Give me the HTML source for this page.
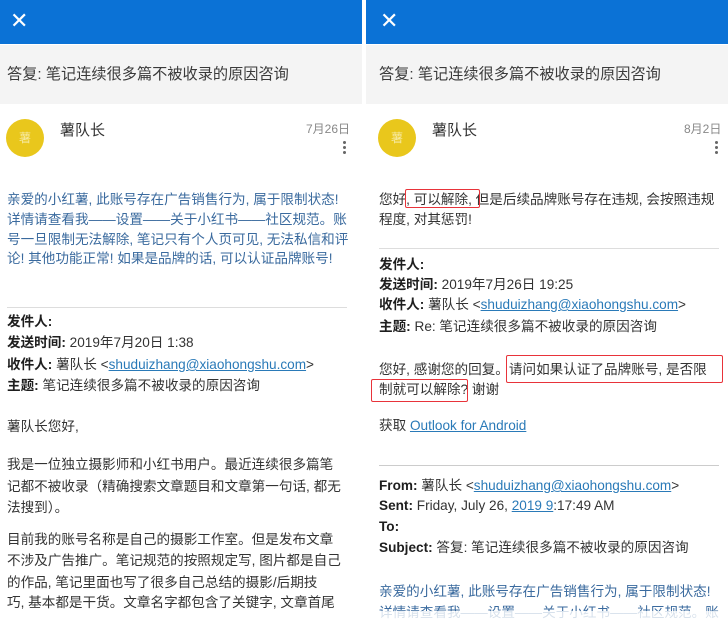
<!DOCTYPE html>
<html><head><meta charset="utf-8"><style>
*{margin:0;padding:0;box-sizing:border-box}
body{width:728px;height:619px;overflow:hidden;background:#fff;position:relative;font-family:"Liberation Sans","Noto Sans CJK SC",sans-serif;color:#333}
.a{position:absolute;white-space:nowrap;font-size:13.6px;line-height:18px}
.hd{position:absolute;top:0;height:44px;background:#0b72d6}
.band{position:absolute;top:45px;height:59px;background:#f4f4f4}
.t{font-size:15.2px;color:#3a3a3a}
.av{position:absolute;width:38px;height:38px;border-radius:50%;background:#e9c71c;color:#f6e9a0;font-size:12px;text-align:center;line-height:38px;top:119px}
.nm{font-size:15px;color:#333}
.dt{font-size:12px;color:#888}
.dots{position:absolute;width:3px;top:141px}
.dots i{display:block;width:3px;height:3px;background:#666;border-radius:50%;margin-bottom:2px}
.bl{color:#3a6a9e}
b{color:#1e1e1e}
.lk{color:#2a7ab8;text-decoration:underline}
.hr{position:absolute;height:1px;background:#ddd}
.rb{position:absolute;border:1.5px solid #e8333a;border-radius:2px}
.x{position:absolute;top:10px;color:#fff;font-size:22px;line-height:22px}
</style></head><body>
<div class="hd" style="left:0;width:362px"></div>
<div class="hd" style="left:366px;width:362px"></div>
<div class="x" style="left:10px">✕</div>
<div class="x" style="left:380px">✕</div>
<div class="band" style="left:0;width:362px"></div>
<div class="band" style="left:366px;width:362px"></div>
<div class="a t" style="left:7px;top:66px">答复: 笔记连续很多篇不被收录的原因咨询</div>
<div class="a t" style="left:379px;top:66px">答复: 笔记连续很多篇不被收录的原因咨询</div>

<div class="av" style="left:6px">薯</div>
<div class="a nm" style="left:60px;top:122px">薯队长</div>
<div class="a dt" style="left:306px;top:120px">7月26日</div>
<div class="dots" style="left:343px"><i></i><i></i><i></i></div>

<div class="av" style="left:378px">薯</div>
<div class="a nm" style="left:432px;top:122px">薯队长</div>
<div class="a dt" style="left:684px;top:120px">8月2日</div>
<div class="dots" style="left:715px"><i></i><i></i><i></i></div>

<div class="a bl" style="left:7px;top:191px">亲爱的小红薯, 此账号存在广告销售行为, 属于限制状态!</div>
<div class="a bl" style="left:7px;top:211px">详情请查看我——设置——关于小红书——社区规范。账</div>
<div class="a bl" style="left:7px;top:231px">号一旦限制无法解除, 笔记只有个人页可见, 无法私信和评</div>
<div class="a bl" style="left:7px;top:250px">论! 其他功能正常! 如果是品牌的话, 可以认证品牌账号!</div>
<div class="hr" style="left:7px;top:307px;width:340px"></div>
<div class="a" style="left:7px;top:313px"><b>发件人:</b></div>
<div class="a" style="left:7px;top:334px"><b>发送时间:</b> 2019年7月20日 1:38</div>
<div class="a" style="left:7px;top:356px"><b>收件人:</b> 薯队长 &lt;<span class="lk">shuduizhang@xiaohongshu.com</span>&gt;</div>
<div class="a" style="left:7px;top:377px"><b>主题:</b> 笔记连续很多篇不被收录的原因咨询</div>
<div class="a" style="left:7px;top:418px">薯队长您好,</div>
<div class="a" style="left:7px;top:456px">我是一位独立摄影师和小红书用户。最近连续很多篇笔</div>
<div class="a" style="left:7px;top:478px">记都不被收录（精确搜索文章题目和文章第一句话, 都无</div>
<div class="a" style="left:7px;top:499px">法搜到）。</div>
<div class="a" style="left:7px;top:531px">目前我的账号名称是自己的摄影工作室。但是发布文章</div>
<div class="a" style="left:7px;top:552px">不涉及广告推广。笔记规范的按照规定写, 图片都是自己</div>
<div class="a" style="left:7px;top:574px">的作品, 笔记里面也写了很多自己总结的摄影/后期技</div>
<div class="a" style="left:7px;top:594px">巧, 基本都是干货。文章名字都包含了关键字, 文章首尾</div>

<div class="a" style="left:379px;top:191px">您好, 可以解除, 但是后续品牌账号存在违规, 会按照违规</div>
<div class="a" style="left:379px;top:211px">程度, 对其惩罚!</div>
<div class="rb" style="left:405px;top:189px;width:75px;height:19px"></div>
<div class="hr" style="left:379px;top:248px;width:340px"></div>
<div class="a" style="left:379px;top:256px"><b>发件人:</b></div>
<div class="a" style="left:379px;top:276px"><b>发送时间:</b> 2019年7月26日 19:25</div>
<div class="a" style="left:379px;top:296px"><b>收件人:</b> 薯队长 &lt;<span class="lk">shuduizhang@xiaohongshu.com</span>&gt;</div>
<div class="a" style="left:379px;top:318px"><b>主题:</b> Re: 笔记连续很多篇不被收录的原因咨询</div>
<div class="a" style="left:379px;top:361px">您好, 感谢您的回复。请问如果认证了品牌账号, 是否限</div>
<div class="a" style="left:379px;top:381px">制就可以解除? 谢谢</div>
<div class="rb" style="left:506px;top:355px;width:217px;height:28px"></div>
<div class="rb" style="left:371px;top:379px;width:97px;height:23px"></div>
<div class="a" style="left:379px;top:417px">获取 <span class="lk">Outlook for Android</span></div>
<div class="hr" style="left:379px;top:465px;width:340px;background:#ccc"></div>
<div class="a" style="left:379px;top:477px"><b>From:</b> 薯队长 &lt;<span class="lk">shuduizhang@xiaohongshu.com</span>&gt;</div>
<div class="a" style="left:379px;top:497px"><b>Sent:</b> Friday, July 26, <span class="lk">2019 9</span>:17:49 AM</div>
<div class="a" style="left:379px;top:518px"><b>To:</b></div>
<div class="a" style="left:379px;top:539px"><b>Subject:</b> 答复: 笔记连续很多篇不被收录的原因咨询</div>
<div class="a bl" style="left:379px;top:583px">亲爱的小红薯, 此账号存在广告销售行为, 属于限制状态!</div>
<div class="a bl" style="left:379px;top:604px">详情请查看我——设置——关于小红书——社区规范。账</div>
<div style="position:absolute;left:364px;top:611px;width:364px;height:8px;background:rgba(255,255,255,.8)"></div>
</body></html>
